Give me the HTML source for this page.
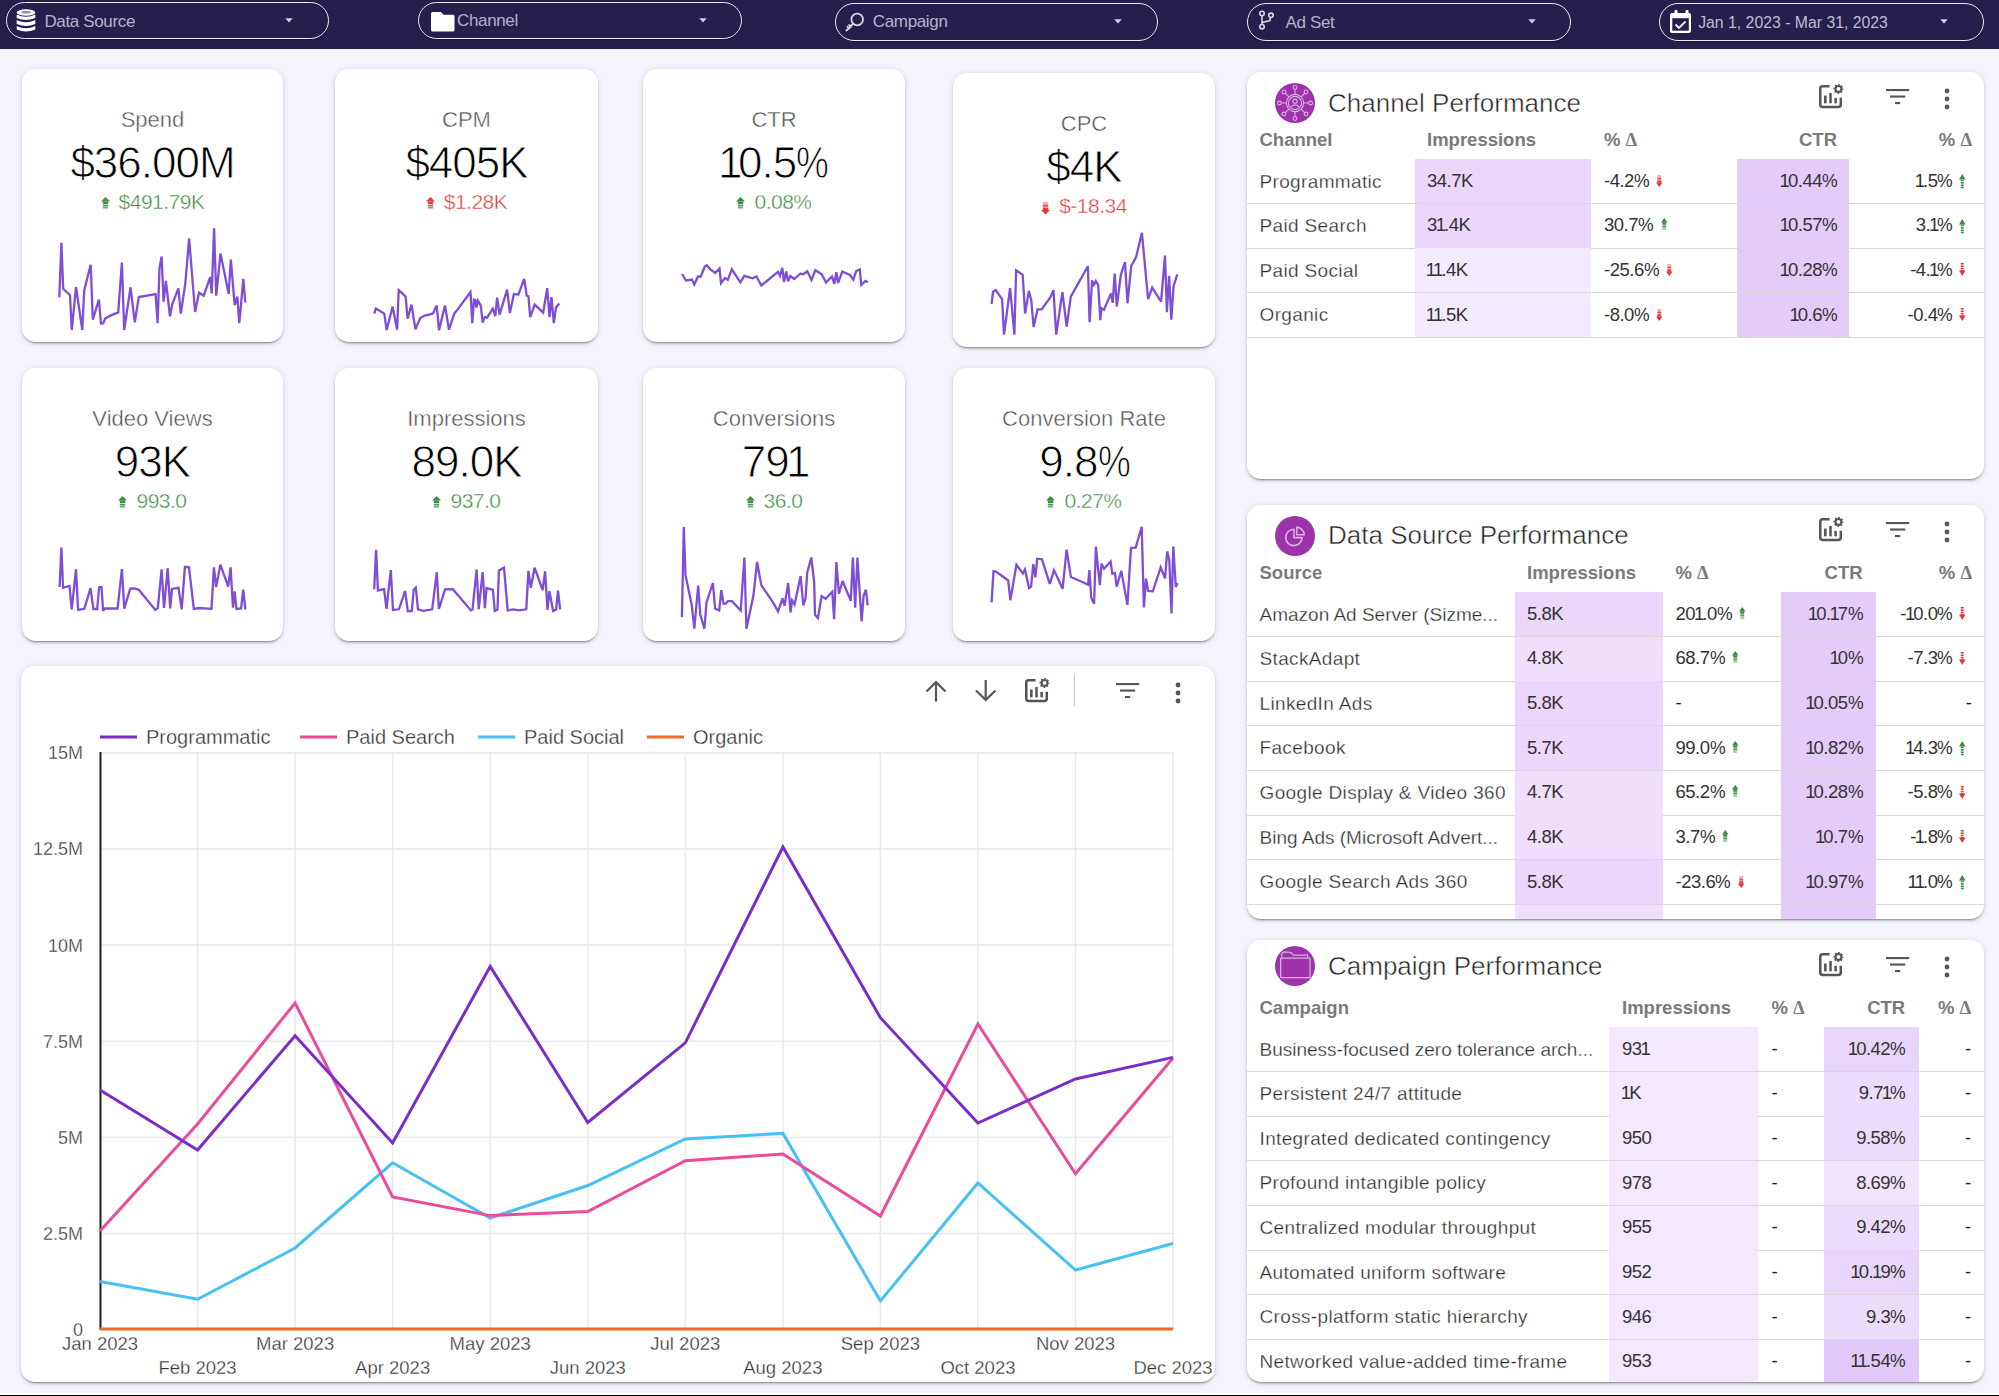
<!DOCTYPE html><html><head><meta charset="utf-8"><style>
html,body{margin:0;padding:0;}
body{width:1999px;height:1396px;overflow:hidden;background:#f5f6fd;position:relative;font-family:"Liberation Sans", sans-serif;}
.t{position:absolute;white-space:nowrap;line-height:1;}
.card{position:absolute;background:#fff;box-shadow:0 3px 1px -2px rgba(0,0,0,.22),0 2px 2px 0 rgba(0,0,0,.15),0 1px 6px 0 rgba(0,0,0,.13);}
.abs{position:absolute;}
svg{position:absolute;overflow:visible;}
</style></head><body>
<div class="abs" style="left:0;top:0;width:1999px;height:49px;background:#261f4e;"></div>
<div class="abs" style="left:6px;top:2px;width:321px;height:35px;border:1.5px solid #ecebf2;border-radius:19px;box-shadow:0 1px 2px rgba(0,0,0,.35);"></div>
<div class="abs" style="left:418px;top:2px;width:322px;height:35px;border:1.5px solid #ecebf2;border-radius:19px;box-shadow:0 1px 2px rgba(0,0,0,.35);"></div>
<div class="abs" style="left:835px;top:3px;width:321px;height:36px;border:1.5px solid #ecebf2;border-radius:19px;box-shadow:0 1px 2px rgba(0,0,0,.35);"></div>
<div class="abs" style="left:1246.5px;top:3px;width:322.0px;height:36px;border:1.5px solid #ecebf2;border-radius:19px;box-shadow:0 1px 2px rgba(0,0,0,.35);"></div>
<div class="abs" style="left:1659px;top:3px;width:323px;height:36px;border:1.5px solid #ecebf2;border-radius:19px;box-shadow:0 1px 2px rgba(0,0,0,.35);"></div>
<div class="card" style="left:22px;top:69px;width:261px;height:273px;border-radius:14px;"></div>
<div class="t" style="left:22.5px;width:260px;text-align:center;top:109.0px;font-size:22px;color:#555;font-weight:normal;-webkit-text-stroke:0.4px #fff;">Spend</div>
<div class="t" style="left:22.5px;width:260px;text-align:center;top:140.5px;font-size:44px;color:#000;font-weight:normal;letter-spacing:-1px;-webkit-text-stroke:0.9px #fff;">$36.00M</div>
<div class="t" style="left:22px;width:261px;text-align:center;top:190.9px;font-size:21px;color:#3d8c40;letter-spacing:-0.5px;-webkit-text-stroke:0.4px #fff;"><svg style="position:relative;display:inline-block;vertical-align:baseline;margin-right:9px;top:1.8px" width="9" height="13.5" viewBox="0 0 9 13.5"><path d="M4.5 0 L9 4.59 L0 4.59 Z" fill="#3d8c40"/><rect x="1.80" y="4.49" width="5.40" height="2.53" fill="#3d8c40" fill-opacity="1.0"/><rect x="1.80" y="7.69" width="5.40" height="1.75" fill="#3d8c40" fill-opacity="0.9"/><rect x="1.80" y="9.86" width="5.40" height="1.08" fill="#3d8c40" fill-opacity="0.75"/><rect x="1.80" y="11.34" width="5.40" height="0.81" fill="#3d8c40" fill-opacity="0.55"/></svg>$491.79K</div>
<div class="card" style="left:335px;top:69px;width:263px;height:273px;border-radius:14px;"></div>
<div class="t" style="left:336.5px;width:260px;text-align:center;top:109.0px;font-size:22px;color:#555;font-weight:normal;-webkit-text-stroke:0.4px #fff;">CPM</div>
<div class="t" style="left:336.5px;width:260px;text-align:center;top:140.5px;font-size:44px;color:#000;font-weight:normal;letter-spacing:-1px;-webkit-text-stroke:0.9px #fff;">$405K</div>
<div class="t" style="left:335px;width:263px;text-align:center;top:190.9px;font-size:21px;color:#e53935;letter-spacing:-0.5px;-webkit-text-stroke:0.4px #fff;"><svg style="position:relative;display:inline-block;vertical-align:baseline;margin-right:9px;top:1.8px" width="9" height="13.5" viewBox="0 0 9 13.5"><path d="M4.5 0 L9 4.59 L0 4.59 Z" fill="#e53935"/><rect x="1.80" y="4.49" width="5.40" height="2.53" fill="#e53935" fill-opacity="1.0"/><rect x="1.80" y="7.69" width="5.40" height="1.75" fill="#e53935" fill-opacity="0.9"/><rect x="1.80" y="9.86" width="5.40" height="1.08" fill="#e53935" fill-opacity="0.75"/><rect x="1.80" y="11.34" width="5.40" height="0.81" fill="#e53935" fill-opacity="0.55"/></svg>$1.28K</div>
<div class="card" style="left:643px;top:69px;width:262px;height:273px;border-radius:14px;"></div>
<div class="t" style="left:644.0px;width:260px;text-align:center;top:109.0px;font-size:22px;color:#555;font-weight:normal;-webkit-text-stroke:0.4px #fff;">CTR</div>
<div class="t" style="left:644.0px;width:260px;text-align:center;top:140.5px;font-size:44px;color:#000;font-weight:normal;letter-spacing:-1px;-webkit-text-stroke:0.9px #fff;"><span style="margin-left:-0.063em;margin-right:-0.077em">1</span>0.5<span style="display:inline-block;transform:scaleX(0.84);transform-origin:0 0;margin-right:-0.16em">%</span></div>
<div class="t" style="left:643px;width:262px;text-align:center;top:190.9px;font-size:21px;color:#3d8c40;letter-spacing:-0.5px;-webkit-text-stroke:0.4px #fff;"><svg style="position:relative;display:inline-block;vertical-align:baseline;margin-right:9px;top:1.8px" width="9" height="13.5" viewBox="0 0 9 13.5"><path d="M4.5 0 L9 4.59 L0 4.59 Z" fill="#3d8c40"/><rect x="1.80" y="4.49" width="5.40" height="2.53" fill="#3d8c40" fill-opacity="1.0"/><rect x="1.80" y="7.69" width="5.40" height="1.75" fill="#3d8c40" fill-opacity="0.9"/><rect x="1.80" y="9.86" width="5.40" height="1.08" fill="#3d8c40" fill-opacity="0.75"/><rect x="1.80" y="11.34" width="5.40" height="0.81" fill="#3d8c40" fill-opacity="0.55"/></svg>0.08%</div>
<div class="card" style="left:953px;top:73px;width:262px;height:274px;border-radius:14px;"></div>
<div class="t" style="left:954.0px;width:260px;text-align:center;top:113.0px;font-size:22px;color:#555;font-weight:normal;-webkit-text-stroke:0.4px #fff;">CPC</div>
<div class="t" style="left:954.0px;width:260px;text-align:center;top:144.5px;font-size:44px;color:#000;font-weight:normal;letter-spacing:-1px;-webkit-text-stroke:0.9px #fff;">$4K</div>
<div class="t" style="left:953px;width:262px;text-align:center;top:194.9px;font-size:21px;color:#e53935;letter-spacing:-0.5px;-webkit-text-stroke:0.4px #fff;"><svg style="position:relative;display:inline-block;vertical-align:baseline;margin-right:9px;top:1.8px" width="9" height="13.5" viewBox="0 0 9 13.5"><path d="M4.5 13.5 L9 8.91 L0 8.91 Z" fill="#e53935"/><rect x="1.80" y="6.48" width="5.40" height="2.53" fill="#e53935" fill-opacity="1.0"/><rect x="1.80" y="4.05" width="5.40" height="1.75" fill="#e53935" fill-opacity="0.9"/><rect x="1.80" y="2.56" width="5.40" height="1.08" fill="#e53935" fill-opacity="0.75"/><rect x="1.80" y="1.35" width="5.40" height="0.81" fill="#e53935" fill-opacity="0.55"/></svg>$-18.34</div>
<div class="card" style="left:22px;top:368px;width:261px;height:273px;border-radius:14px;"></div>
<div class="t" style="left:22.5px;width:260px;text-align:center;top:408.0px;font-size:22px;color:#555;font-weight:normal;-webkit-text-stroke:0.4px #fff;">Video Views</div>
<div class="t" style="left:22.5px;width:260px;text-align:center;top:439.5px;font-size:44px;color:#000;font-weight:normal;letter-spacing:-1px;-webkit-text-stroke:0.9px #fff;">93K</div>
<div class="t" style="left:22px;width:261px;text-align:center;top:489.9px;font-size:21px;color:#3d8c40;letter-spacing:-0.5px;-webkit-text-stroke:0.4px #fff;"><svg style="position:relative;display:inline-block;vertical-align:baseline;margin-right:9px;top:1.8px" width="9" height="13.5" viewBox="0 0 9 13.5"><path d="M4.5 0 L9 4.59 L0 4.59 Z" fill="#3d8c40"/><rect x="1.80" y="4.49" width="5.40" height="2.53" fill="#3d8c40" fill-opacity="1.0"/><rect x="1.80" y="7.69" width="5.40" height="1.75" fill="#3d8c40" fill-opacity="0.9"/><rect x="1.80" y="9.86" width="5.40" height="1.08" fill="#3d8c40" fill-opacity="0.75"/><rect x="1.80" y="11.34" width="5.40" height="0.81" fill="#3d8c40" fill-opacity="0.55"/></svg>993.0</div>
<div class="card" style="left:335px;top:368px;width:263px;height:273px;border-radius:14px;"></div>
<div class="t" style="left:336.5px;width:260px;text-align:center;top:408.0px;font-size:22px;color:#555;font-weight:normal;-webkit-text-stroke:0.4px #fff;">Impressions</div>
<div class="t" style="left:336.5px;width:260px;text-align:center;top:439.5px;font-size:44px;color:#000;font-weight:normal;letter-spacing:-1px;-webkit-text-stroke:0.9px #fff;">89.0K</div>
<div class="t" style="left:335px;width:263px;text-align:center;top:489.9px;font-size:21px;color:#3d8c40;letter-spacing:-0.5px;-webkit-text-stroke:0.4px #fff;"><svg style="position:relative;display:inline-block;vertical-align:baseline;margin-right:9px;top:1.8px" width="9" height="13.5" viewBox="0 0 9 13.5"><path d="M4.5 0 L9 4.59 L0 4.59 Z" fill="#3d8c40"/><rect x="1.80" y="4.49" width="5.40" height="2.53" fill="#3d8c40" fill-opacity="1.0"/><rect x="1.80" y="7.69" width="5.40" height="1.75" fill="#3d8c40" fill-opacity="0.9"/><rect x="1.80" y="9.86" width="5.40" height="1.08" fill="#3d8c40" fill-opacity="0.75"/><rect x="1.80" y="11.34" width="5.40" height="0.81" fill="#3d8c40" fill-opacity="0.55"/></svg>937.0</div>
<div class="card" style="left:643px;top:368px;width:262px;height:273px;border-radius:14px;"></div>
<div class="t" style="left:644.0px;width:260px;text-align:center;top:408.0px;font-size:22px;color:#555;font-weight:normal;-webkit-text-stroke:0.4px #fff;">Conversions</div>
<div class="t" style="left:644.0px;width:260px;text-align:center;top:439.5px;font-size:44px;color:#000;font-weight:normal;letter-spacing:-1px;-webkit-text-stroke:0.9px #fff;">79<span style="margin-left:-0.063em;margin-right:-0.077em">1</span></div>
<div class="t" style="left:643px;width:262px;text-align:center;top:489.9px;font-size:21px;color:#3d8c40;letter-spacing:-0.5px;-webkit-text-stroke:0.4px #fff;"><svg style="position:relative;display:inline-block;vertical-align:baseline;margin-right:9px;top:1.8px" width="9" height="13.5" viewBox="0 0 9 13.5"><path d="M4.5 0 L9 4.59 L0 4.59 Z" fill="#3d8c40"/><rect x="1.80" y="4.49" width="5.40" height="2.53" fill="#3d8c40" fill-opacity="1.0"/><rect x="1.80" y="7.69" width="5.40" height="1.75" fill="#3d8c40" fill-opacity="0.9"/><rect x="1.80" y="9.86" width="5.40" height="1.08" fill="#3d8c40" fill-opacity="0.75"/><rect x="1.80" y="11.34" width="5.40" height="0.81" fill="#3d8c40" fill-opacity="0.55"/></svg>36.0</div>
<div class="card" style="left:953px;top:368px;width:262px;height:273px;border-radius:14px;"></div>
<div class="t" style="left:954.0px;width:260px;text-align:center;top:408.0px;font-size:22px;color:#555;font-weight:normal;-webkit-text-stroke:0.4px #fff;">Conversion Rate</div>
<div class="t" style="left:954.0px;width:260px;text-align:center;top:439.5px;font-size:44px;color:#000;font-weight:normal;letter-spacing:-1px;-webkit-text-stroke:0.9px #fff;">9.8<span style="display:inline-block;transform:scaleX(0.84);transform-origin:0 0;margin-right:-0.16em">%</span></div>
<div class="t" style="left:953px;width:262px;text-align:center;top:489.9px;font-size:21px;color:#3d8c40;letter-spacing:-0.5px;-webkit-text-stroke:0.4px #fff;"><svg style="position:relative;display:inline-block;vertical-align:baseline;margin-right:9px;top:1.8px" width="9" height="13.5" viewBox="0 0 9 13.5"><path d="M4.5 0 L9 4.59 L0 4.59 Z" fill="#3d8c40"/><rect x="1.80" y="4.49" width="5.40" height="2.53" fill="#3d8c40" fill-opacity="1.0"/><rect x="1.80" y="7.69" width="5.40" height="1.75" fill="#3d8c40" fill-opacity="0.9"/><rect x="1.80" y="9.86" width="5.40" height="1.08" fill="#3d8c40" fill-opacity="0.75"/><rect x="1.80" y="11.34" width="5.40" height="0.81" fill="#3d8c40" fill-opacity="0.55"/></svg>0.27%</div>
<div class="card" style="left:21px;top:666px;width:1194px;height:716px;border-radius:14px;"></div>
<div class="card" style="left:1247px;top:72px;width:737px;height:407px;border-radius:14px;"></div>
<div class="card" style="left:1247px;top:505px;width:737px;height:414px;border-radius:14px;"></div>
<div class="card" style="left:1247px;top:940px;width:737px;height:442px;border-radius:14px;"></div>
<div class="t" style="left:44.4px;top:12.5px;font-size:17px;color:#b3b2cc;font-weight:normal;letter-spacing:-0.35px;">Data Source</div>
<div class="t" style="left:457px;top:12.2px;font-size:17px;color:#b3b2cc;font-weight:normal;letter-spacing:-0.35px;">Channel</div>
<div class="t" style="left:872.8px;top:13.4px;font-size:17px;color:#b3b2cc;font-weight:normal;letter-spacing:-0.35px;">Campaign</div>
<div class="t" style="left:1285.5px;top:14.0px;font-size:17px;color:#b3b2cc;font-weight:normal;letter-spacing:-0.35px;">Ad Set</div>
<div class="t" style="left:1698.2px;top:15.4px;font-size:15.8px;color:#bcbbd3;font-weight:normal;">Jan 1, 2023 - Mar 31, 2023</div>
<svg style="left:285.2px;top:17.9px" width="8" height="5"><path d="M0.3 0.3 L7.7 0.3 L4 4.4 Z" fill="#d2d1e3"/></svg>
<svg style="left:698.8px;top:17.9px" width="8" height="5"><path d="M0.3 0.3 L7.7 0.3 L4 4.4 Z" fill="#d2d1e3"/></svg>
<svg style="left:1114.4px;top:19.0px" width="8" height="5"><path d="M0.3 0.3 L7.7 0.3 L4 4.4 Z" fill="#d2d1e3"/></svg>
<svg style="left:1527.8px;top:19.0px" width="8" height="5"><path d="M0.3 0.3 L7.7 0.3 L4 4.4 Z" fill="#d2d1e3"/></svg>
<svg style="left:1939.7px;top:18.9px" width="8" height="5"><path d="M0.3 0.3 L7.7 0.3 L4 4.4 Z" fill="#d2d1e3"/></svg>
<svg style="left:16px;top:9px" width="20" height="24" viewBox="0 0 20 24"><ellipse cx="10" cy="3.5" rx="9.3" ry="3.2" fill="#fff"/><path d="M0.7 5.5 Q10 10 19.3 5.5 L19.3 9 Q10 13 0.7 9 Z" fill="#fff"/><path d="M0.7 11 Q10 15.5 19.3 11 L19.3 15 Q10 19 0.7 15 Z" fill="#fff"/><path d="M0.7 17 Q10 21.5 19.3 17 L19.3 20.5 Q10 24.5 0.7 20.5 Z" fill="#fff"/><ellipse cx="10" cy="3.3" rx="5" ry="1.3" fill="#8e8ca8"/></svg>
<svg style="left:430.5px;top:11.5px" width="24" height="20" viewBox="0 0 24 20"><path d="M1.5 0 H10 L12.5 2.7 H22 Q23.5 2.7 23.5 4.2 V18 Q23.5 19.5 22 19.5 H1.5 Q0 19.5 0 18 V1.5 Q0 0 1.5 0 Z" fill="#fff"/></svg>
<svg style="left:844px;top:11px" width="24" height="22" viewBox="0 0 24 22"><circle cx="13.2" cy="8.5" r="5.8" fill="none" stroke="#d8d7e6" stroke-width="1.8"/><path d="M9.2 12.7 L2.5 19.5 M3.5 15.8 L5.5 17.5 M5.2 14 L7 15.7" stroke="#d8d7e6" stroke-width="1.9" fill="none" stroke-linecap="round"/></svg>
<svg style="left:1257px;top:9px" width="22" height="22" viewBox="0 0 22 22"><circle cx="5" cy="4.5" r="2.2" fill="none" stroke="#d8d7e6" stroke-width="1.6"/><circle cx="14" cy="6.3" r="2.2" fill="none" stroke="#d8d7e6" stroke-width="1.6"/><circle cx="5" cy="17.7" r="2.2" fill="none" stroke="#d8d7e6" stroke-width="1.6"/><path d="M5 6.7 V15.5 M13.5 8.5 L12.8 11.5 L5.5 13.5" fill="none" stroke="#d8d7e6" stroke-width="1.6"/></svg>
<svg style="left:1670px;top:9.5px" width="22" height="24" viewBox="0 0 22 24"><rect x="0" y="3" width="21" height="20" rx="2" fill="#fff"/><rect x="4.5" y="0" width="3" height="4" rx="1" fill="#fff"/><rect x="15.5" y="0" width="3" height="4" rx="1" fill="#fff"/><rect x="2.3" y="8.2" width="16.5" height="12.5" fill="#261f4e"/><path d="M5.5 14.5 L9 18 L15.5 11.5" fill="none" stroke="#fff" stroke-width="1.8"/></svg>
<svg style="left:0;top:0" width="1999" height="1396"><line x1="100" y1="1329.5" x2="1173.5" y2="1329.5" stroke="#e9e9ee" stroke-width="1.5"/><line x1="100" y1="1233.4" x2="1173.5" y2="1233.4" stroke="#e9e9ee" stroke-width="1.5"/><line x1="100" y1="1137.3" x2="1173.5" y2="1137.3" stroke="#e9e9ee" stroke-width="1.5"/><line x1="100" y1="1041.2" x2="1173.5" y2="1041.2" stroke="#e9e9ee" stroke-width="1.5"/><line x1="100" y1="945.1" x2="1173.5" y2="945.1" stroke="#e9e9ee" stroke-width="1.5"/><line x1="100" y1="849.0" x2="1173.5" y2="849.0" stroke="#e9e9ee" stroke-width="1.5"/><line x1="100" y1="752.9" x2="1173.5" y2="752.9" stroke="#e9e9ee" stroke-width="1.5"/><line x1="100.0" y1="752" x2="100.0" y2="1329" stroke="#e9e9ee" stroke-width="1.5"/><line x1="197.6" y1="752" x2="197.6" y2="1329" stroke="#e9e9ee" stroke-width="1.5"/><line x1="295.1" y1="752" x2="295.1" y2="1329" stroke="#e9e9ee" stroke-width="1.5"/><line x1="392.6" y1="752" x2="392.6" y2="1329" stroke="#e9e9ee" stroke-width="1.5"/><line x1="490.2" y1="752" x2="490.2" y2="1329" stroke="#e9e9ee" stroke-width="1.5"/><line x1="587.8" y1="752" x2="587.8" y2="1329" stroke="#e9e9ee" stroke-width="1.5"/><line x1="685.3" y1="752" x2="685.3" y2="1329" stroke="#e9e9ee" stroke-width="1.5"/><line x1="782.9" y1="752" x2="782.9" y2="1329" stroke="#e9e9ee" stroke-width="1.5"/><line x1="880.4" y1="752" x2="880.4" y2="1329" stroke="#e9e9ee" stroke-width="1.5"/><line x1="977.9" y1="752" x2="977.9" y2="1329" stroke="#e9e9ee" stroke-width="1.5"/><line x1="1075.5" y1="752" x2="1075.5" y2="1329" stroke="#e9e9ee" stroke-width="1.5"/><line x1="1173.0" y1="752" x2="1173.0" y2="1329" stroke="#e9e9ee" stroke-width="1.5"/><line x1="100.5" y1="752" x2="100.5" y2="1330" stroke="#222" stroke-width="2"/><line x1="100" y1="1329" x2="1173" y2="1329" stroke="#ef6c2a" stroke-width="3"/><polyline points="100.0,1281.6 197.6,1299.3 295.1,1248.0 392.6,1162.8 490.2,1218.0 587.8,1185.5 685.3,1139.0 782.9,1133.4 880.4,1301.0 977.9,1183.0 1075.5,1270.0 1173.0,1243.5" fill="none" stroke="#47c1f4" stroke-width="3" stroke-linejoin="miter"/><polyline points="100.0,1231.0 197.6,1124.0 295.1,1003.0 392.6,1197.0 490.2,1215.6 587.8,1211.5 685.3,1160.7 782.9,1154.0 880.4,1216.0 977.9,1024.0 1075.5,1173.7 1173.0,1058.0" fill="none" stroke="#ea4b9a" stroke-width="3" stroke-linejoin="miter"/><polyline points="100.0,1090.0 197.6,1150.0 295.1,1035.7 392.6,1143.0 490.2,966.4 587.8,1122.5 685.3,1042.8 782.9,847.0 880.4,1017.7 977.9,1123.0 1075.5,1079.0 1173.0,1057.4" fill="none" stroke="#7a2ec9" stroke-width="3" stroke-linejoin="miter"/><line x1="100" y1="737" x2="137" y2="737" stroke="#7a2ec9" stroke-width="3"/><line x1="300" y1="737" x2="337" y2="737" stroke="#ea4b9a" stroke-width="3"/><line x1="478" y1="737" x2="515" y2="737" stroke="#47c1f4" stroke-width="3"/><line x1="647" y1="737" x2="684" y2="737" stroke="#ef6c2a" stroke-width="3"/></svg>
<div class="t" style="left:146px;top:726.8px;font-size:20px;color:#333;font-weight:normal;-webkit-text-stroke:0.3px #fff;">Programmatic</div>
<div class="t" style="left:346px;top:726.8px;font-size:20px;color:#333;font-weight:normal;-webkit-text-stroke:0.3px #fff;">Paid Search</div>
<div class="t" style="left:524px;top:726.8px;font-size:20px;color:#333;font-weight:normal;-webkit-text-stroke:0.3px #fff;">Paid Social</div>
<div class="t" style="left:693px;top:726.8px;font-size:20px;color:#333;font-weight:normal;-webkit-text-stroke:0.3px #fff;">Organic</div>
<div class="t" style="right:1916px;top:1320.9px;font-size:18px;color:#333;font-weight:normal;-webkit-text-stroke:0.3px #fff;">0</div>
<div class="t" style="right:1916px;top:1224.8px;font-size:18px;color:#333;font-weight:normal;-webkit-text-stroke:0.3px #fff;">2.5M</div>
<div class="t" style="right:1916px;top:1128.7px;font-size:18px;color:#333;font-weight:normal;-webkit-text-stroke:0.3px #fff;">5M</div>
<div class="t" style="right:1916px;top:1032.6px;font-size:18px;color:#333;font-weight:normal;-webkit-text-stroke:0.3px #fff;">7.5M</div>
<div class="t" style="right:1916px;top:936.5px;font-size:18px;color:#333;font-weight:normal;-webkit-text-stroke:0.3px #fff;">10M</div>
<div class="t" style="right:1916px;top:840.4px;font-size:18px;color:#333;font-weight:normal;-webkit-text-stroke:0.3px #fff;">12.5M</div>
<div class="t" style="right:1916px;top:744.3px;font-size:18px;color:#333;font-weight:normal;-webkit-text-stroke:0.3px #fff;">15M</div>
<div class="t" style="left:0.0px;width:200px;text-align:center;top:1335.1px;font-size:18.5px;color:#333;font-weight:normal;-webkit-text-stroke:0.3px #fff;">Jan 2023</div>
<div class="t" style="left:97.55000000000001px;width:200px;text-align:center;top:1358.6px;font-size:18.5px;color:#333;font-weight:normal;-webkit-text-stroke:0.3px #fff;">Feb 2023</div>
<div class="t" style="left:195.10000000000002px;width:200px;text-align:center;top:1335.1px;font-size:18.5px;color:#333;font-weight:normal;-webkit-text-stroke:0.3px #fff;">Mar 2023</div>
<div class="t" style="left:292.65px;width:200px;text-align:center;top:1358.6px;font-size:18.5px;color:#333;font-weight:normal;-webkit-text-stroke:0.3px #fff;">Apr 2023</div>
<div class="t" style="left:390.2px;width:200px;text-align:center;top:1335.1px;font-size:18.5px;color:#333;font-weight:normal;-webkit-text-stroke:0.3px #fff;">May 2023</div>
<div class="t" style="left:487.75px;width:200px;text-align:center;top:1358.6px;font-size:18.5px;color:#333;font-weight:normal;-webkit-text-stroke:0.3px #fff;">Jun 2023</div>
<div class="t" style="left:585.3px;width:200px;text-align:center;top:1335.1px;font-size:18.5px;color:#333;font-weight:normal;-webkit-text-stroke:0.3px #fff;">Jul 2023</div>
<div class="t" style="left:682.85px;width:200px;text-align:center;top:1358.6px;font-size:18.5px;color:#333;font-weight:normal;-webkit-text-stroke:0.3px #fff;">Aug 2023</div>
<div class="t" style="left:780.4px;width:200px;text-align:center;top:1335.1px;font-size:18.5px;color:#333;font-weight:normal;-webkit-text-stroke:0.3px #fff;">Sep 2023</div>
<div class="t" style="left:877.9499999999999px;width:200px;text-align:center;top:1358.6px;font-size:18.5px;color:#333;font-weight:normal;-webkit-text-stroke:0.3px #fff;">Oct 2023</div>
<div class="t" style="left:975.5px;width:200px;text-align:center;top:1335.1px;font-size:18.5px;color:#333;font-weight:normal;-webkit-text-stroke:0.3px #fff;">Nov 2023</div>
<div class="t" style="left:1073.05px;width:200px;text-align:center;top:1358.6px;font-size:18.5px;color:#333;font-weight:normal;-webkit-text-stroke:0.3px #fff;">Dec 2023</div>
<svg style="left:0;top:0" width="1999" height="1396"><path d="M936 701.5 V681.5 M926.5 691.5 L936 682 L945.5 691.5" fill="none" stroke="#555" stroke-width="2.2"/><path d="M985.7 680 V700 M976 690.5 L985.7 700 L995.5 690.5" fill="none" stroke="#555" stroke-width="2.2"/><line x1="1074.4" y1="675" x2="1074.4" y2="706.5" stroke="#cfcfcf" stroke-width="1.2"/></svg>
<svg style="left:1025.05px;top:674.05px" width="30" height="30" viewBox="0 -5 30 30"><path d="M10.55 1.25 H3.75 Q1.25 1.25 1.25 3.75 V19.6 Q1.25 22.1 3.75 22.1 H19.3 Q21.8 22.1 21.8 19.6 V12.85" fill="none" stroke="#555" stroke-width="2.5"/><rect x="5.05" y="10.55" width="2.6" height="7.8" fill="#555"/><rect x="10.25" y="7.95" width="2.5" height="10.4" fill="#555"/><rect x="15.35" y="12.85" width="2.5" height="5.5" fill="#555"/><circle cx="19.45" cy="3.95" r="2.95" fill="none" stroke="#555" stroke-width="2.1"/><circle cx="19.45" cy="3.95" r="4.35" fill="none" stroke="#555" stroke-width="1.3" stroke-dasharray="1.75 1.67" stroke-dashoffset="0.9"/></svg>
<svg style="left:1116px;top:683.2px" width="24" height="16" viewBox="0 0 24 16"><rect x="0" y="0" width="23.2" height="2.1" fill="#555"/><rect x="4" y="6.5" width="15.2" height="2.1" fill="#555"/><rect x="9" y="13" width="5.2" height="2.1" fill="#555"/></svg>
<svg style="left:1175.4px;top:681.8px" width="6" height="22" viewBox="0 0 6 22"><circle cx="3" cy="3" r="2.4" fill="#555"/><circle cx="3" cy="11" r="2.4" fill="#555"/><circle cx="3" cy="19" r="2.4" fill="#555"/></svg>
<div class="t" style="left:1328px;top:89.9px;font-size:26px;color:#222;font-weight:normal;-webkit-text-stroke:0.5px #fff;">Channel Performance</div>
<svg style="left:1274px;top:81.5px" width="42" height="42" viewBox="0 0 42 42"><circle cx="21" cy="21" r="20" fill="#9c33ab"/><circle cx="21" cy="21" r="8.6" fill="none" stroke="#dcb0e3" stroke-width="1.1"/><circle cx="21" cy="21" r="6.6" fill="none" stroke="#dcb0e3" stroke-width="1.1"/><circle cx="21" cy="19.2" r="2.1" fill="none" stroke="#dcb0e3" stroke-width="1.1"/><path d="M16.8 24.8 Q21 20.8 25.2 24.8" fill="none" stroke="#dcb0e3" stroke-width="1.1"/><line x1="21.00" y1="12.40" x2="21.00" y2="7.40" stroke="#dcb0e3" stroke-width="1.1"/><circle cx="21.00" cy="5.40" r="1.9" fill="none" stroke="#dcb0e3" stroke-width="1.1"/><line x1="27.08" y1="14.92" x2="30.62" y2="11.38" stroke="#dcb0e3" stroke-width="1.1"/><circle cx="32.03" cy="9.97" r="1.9" fill="none" stroke="#dcb0e3" stroke-width="1.1"/><line x1="29.60" y1="21.00" x2="34.60" y2="21.00" stroke="#dcb0e3" stroke-width="1.1"/><circle cx="36.60" cy="21.00" r="1.9" fill="none" stroke="#dcb0e3" stroke-width="1.1"/><line x1="27.08" y1="27.08" x2="30.62" y2="30.62" stroke="#dcb0e3" stroke-width="1.1"/><circle cx="32.03" cy="32.03" r="1.9" fill="none" stroke="#dcb0e3" stroke-width="1.1"/><line x1="21.00" y1="29.60" x2="21.00" y2="34.60" stroke="#dcb0e3" stroke-width="1.1"/><circle cx="21.00" cy="36.60" r="1.9" fill="none" stroke="#dcb0e3" stroke-width="1.1"/><line x1="14.92" y1="27.08" x2="11.38" y2="30.62" stroke="#dcb0e3" stroke-width="1.1"/><circle cx="9.97" cy="32.03" r="1.9" fill="none" stroke="#dcb0e3" stroke-width="1.1"/><line x1="12.40" y1="21.00" x2="7.40" y2="21.00" stroke="#dcb0e3" stroke-width="1.1"/><circle cx="5.40" cy="21.00" r="1.9" fill="none" stroke="#dcb0e3" stroke-width="1.1"/><line x1="14.92" y1="14.92" x2="11.38" y2="11.38" stroke="#dcb0e3" stroke-width="1.1"/><circle cx="9.97" cy="9.97" r="1.9" fill="none" stroke="#dcb0e3" stroke-width="1.1"/></svg>
<svg style="left:1819.2px;top:80.1px" width="30" height="30" viewBox="0 -5 30 30"><path d="M10.55 1.25 H3.75 Q1.25 1.25 1.25 3.75 V19.6 Q1.25 22.1 3.75 22.1 H19.3 Q21.8 22.1 21.8 19.6 V12.85" fill="none" stroke="#555" stroke-width="2.5"/><rect x="5.05" y="10.55" width="2.6" height="7.8" fill="#555"/><rect x="10.25" y="7.95" width="2.5" height="10.4" fill="#555"/><rect x="15.35" y="12.85" width="2.5" height="5.5" fill="#555"/><circle cx="19.45" cy="3.95" r="2.95" fill="none" stroke="#555" stroke-width="2.1"/><circle cx="19.45" cy="3.95" r="4.35" fill="none" stroke="#555" stroke-width="1.3" stroke-dasharray="1.75 1.67" stroke-dashoffset="0.9"/></svg>
<svg style="left:1886px;top:89px" width="24" height="16" viewBox="0 0 24 16"><rect x="0" y="0" width="23.2" height="2.1" fill="#555"/><rect x="4" y="6.5" width="15.2" height="2.1" fill="#555"/><rect x="9" y="13" width="5.2" height="2.1" fill="#555"/></svg>
<svg style="left:1944.2px;top:87.6px" width="6" height="22" viewBox="0 0 6 22"><circle cx="3" cy="3" r="2.4" fill="#555"/><circle cx="3" cy="11" r="2.4" fill="#555"/><circle cx="3" cy="19" r="2.4" fill="#555"/></svg>
<div class="t" style="left:1259.5px;top:130.6px;font-size:18.5px;color:#7a7a7a;font-weight:bold;">Channel</div>
<div class="t" style="left:1427px;top:130.6px;font-size:18.5px;color:#7a7a7a;font-weight:bold;">Impressions</div>
<div class="t" style="left:1604px;top:130.6px;font-size:18.5px;color:#7a7a7a;font-weight:bold;">% <span style="font-family:&quot;Liberation Serif&quot;, serif">&#916;</span></div>
<div class="t" style="right:162px;top:130.6px;font-size:18.5px;color:#7a7a7a;font-weight:bold;">CTR</div>
<div class="t" style="right:27px;top:130.6px;font-size:18.5px;color:#7a7a7a;font-weight:bold;">% <span style="font-family:&quot;Liberation Serif&quot;, serif">&#916;</span></div>
<div class="abs" style="left:1415px;top:159.0px;width:176px;height:44.7px;background:#ebd7fb;"></div>
<div class="abs" style="left:1737px;top:159.0px;width:112px;height:44.7px;background:#e3cbfa;"></div>
<div class="abs" style="left:1247px;top:203.0px;width:737px;height:1.3px;background:#d9d9d9;"></div>
<div class="abs" style="left:1415px;top:203.7px;width:176px;height:44.7px;background:#ebd7fb;"></div>
<div class="abs" style="left:1737px;top:203.7px;width:112px;height:44.7px;background:#e3cbfa;"></div>
<div class="abs" style="left:1247px;top:247.6px;width:737px;height:1.3px;background:#d9d9d9;"></div>
<div class="abs" style="left:1415px;top:248.3px;width:176px;height:44.6px;background:#f4eafd;"></div>
<div class="abs" style="left:1737px;top:248.3px;width:112px;height:44.6px;background:#e3cbfa;"></div>
<div class="abs" style="left:1247px;top:292.2px;width:737px;height:1.3px;background:#d9d9d9;"></div>
<div class="abs" style="left:1415px;top:292.9px;width:176px;height:44.6px;background:#f4eafd;"></div>
<div class="abs" style="left:1737px;top:292.9px;width:112px;height:44.6px;background:#e3cbfa;"></div>
<div class="abs" style="left:1247px;top:336.9px;width:737px;height:1.3px;background:#d9d9d9;"></div>
<div class="t" style="left:1259.5px;top:171.5px;font-size:19px;color:#2a2a2a;font-weight:normal;letter-spacing:0.35px;-webkit-text-stroke:0.3px #fff;">Programmatic</div>
<div class="t" style="left:1427px;top:171.6px;font-size:18.5px;color:#333;font-weight:normal;letter-spacing:-0.5px;">34.7K</div>
<div class="t" style="left:1604px;top:171.6px;font-size:18.5px;color:#333;letter-spacing:-0.5px;">-4.2<span style="display:inline-block;transform:scaleX(0.95);transform-origin:0 0;margin-right:-0.05em">%</span><svg style="position:relative;display:inline-block;vertical-align:baseline;margin-left:7.5px;" width="6.5" height="13" viewBox="0 0 6.5 13"><path d="M3.25 13 L6.5 8.58 L0 8.58 Z" fill="#e53935"/><rect x="1.30" y="6.24" width="3.90" height="2.44" fill="#e53935" fill-opacity="1.0"/><rect x="1.30" y="3.90" width="3.90" height="1.69" fill="#e53935" fill-opacity="0.9"/><rect x="1.30" y="2.47" width="3.90" height="1.04" fill="#e53935" fill-opacity="0.75"/><rect x="1.30" y="1.30" width="3.90" height="0.78" fill="#e53935" fill-opacity="0.55"/></svg></div>
<div class="t" style="right:162px;top:171.6px;font-size:18.5px;color:#333;font-weight:normal;letter-spacing:-0.5px;"><span style="margin-left:-0.063em;margin-right:-0.077em">1</span>0.44<span style="display:inline-block;transform:scaleX(0.95);transform-origin:0 0;margin-right:-0.05em">%</span></div>
<svg style="left:1959px;top:174.0px" width="6.5" height="13" viewBox="0 0 6.5 13"><path d="M3.25 0 L6.5 5.46 L0 5.46 Z" fill="#3d8c40"/><rect x="1.8200000000000003" y="5.66" width="2.86" height="1.6" fill="#3d8c40"/><rect x="1.8200000000000003" y="8.06" width="2.86" height="1.6" fill="#3d8c40"/><rect x="1.8200000000000003" y="10.46" width="2.86" height="1.6" fill="#3d8c40"/><rect x="1.8200000000000003" y="12.66" width="2.86" height="1.6" fill="#3d8c40"/></svg>
<div class="t" style="right:46.5px;top:171.6px;font-size:18.5px;color:#333;font-weight:normal;letter-spacing:-0.5px;"><span style="margin-left:-0.063em;margin-right:-0.077em">1</span>.5<span style="display:inline-block;transform:scaleX(0.95);transform-origin:0 0;margin-right:-0.05em">%</span></div>
<div class="t" style="left:1259.5px;top:216.1px;font-size:19px;color:#2a2a2a;font-weight:normal;letter-spacing:0.35px;-webkit-text-stroke:0.3px #fff;">Paid Search</div>
<div class="t" style="left:1427px;top:216.2px;font-size:18.5px;color:#333;font-weight:normal;letter-spacing:-0.5px;">3<span style="margin-left:-0.063em;margin-right:-0.077em">1</span>.4K</div>
<div class="t" style="left:1604px;top:216.2px;font-size:18.5px;color:#333;letter-spacing:-0.5px;">30.7<span style="display:inline-block;transform:scaleX(0.95);transform-origin:0 0;margin-right:-0.05em">%</span><svg style="position:relative;display:inline-block;vertical-align:baseline;margin-left:7.5px;" width="6.5" height="13" viewBox="0 0 6.5 13"><path d="M3.25 0 L6.5 4.42 L0 4.42 Z" fill="#3d8c40"/><rect x="1.30" y="4.32" width="3.90" height="2.44" fill="#3d8c40" fill-opacity="1.0"/><rect x="1.30" y="7.41" width="3.90" height="1.69" fill="#3d8c40" fill-opacity="0.9"/><rect x="1.30" y="9.49" width="3.90" height="1.04" fill="#3d8c40" fill-opacity="0.75"/><rect x="1.30" y="10.92" width="3.90" height="0.78" fill="#3d8c40" fill-opacity="0.55"/></svg></div>
<div class="t" style="right:162px;top:216.2px;font-size:18.5px;color:#333;font-weight:normal;letter-spacing:-0.5px;"><span style="margin-left:-0.063em;margin-right:-0.077em">1</span>0.57<span style="display:inline-block;transform:scaleX(0.95);transform-origin:0 0;margin-right:-0.05em">%</span></div>
<svg style="left:1959px;top:218.65px" width="6.5" height="13" viewBox="0 0 6.5 13"><path d="M3.25 0 L6.5 5.46 L0 5.46 Z" fill="#3d8c40"/><rect x="1.8200000000000003" y="5.66" width="2.86" height="1.6" fill="#3d8c40"/><rect x="1.8200000000000003" y="8.06" width="2.86" height="1.6" fill="#3d8c40"/><rect x="1.8200000000000003" y="10.46" width="2.86" height="1.6" fill="#3d8c40"/><rect x="1.8200000000000003" y="12.66" width="2.86" height="1.6" fill="#3d8c40"/></svg>
<div class="t" style="right:46.5px;top:216.2px;font-size:18.5px;color:#333;font-weight:normal;letter-spacing:-0.5px;">3.<span style="margin-left:-0.063em;margin-right:-0.077em">1</span><span style="display:inline-block;transform:scaleX(0.95);transform-origin:0 0;margin-right:-0.05em">%</span></div>
<div class="t" style="left:1259.5px;top:260.8px;font-size:19px;color:#2a2a2a;font-weight:normal;letter-spacing:0.35px;-webkit-text-stroke:0.3px #fff;">Paid Social</div>
<div class="t" style="left:1427px;top:260.9px;font-size:18.5px;color:#333;font-weight:normal;letter-spacing:-0.5px;"><span style="margin-left:-0.063em;margin-right:-0.077em">1</span><span style="margin-left:-0.063em;margin-right:-0.077em">1</span>.4K</div>
<div class="t" style="left:1604px;top:260.9px;font-size:18.5px;color:#333;letter-spacing:-0.5px;">-25.6<span style="display:inline-block;transform:scaleX(0.95);transform-origin:0 0;margin-right:-0.05em">%</span><svg style="position:relative;display:inline-block;vertical-align:baseline;margin-left:7.5px;" width="6.5" height="13" viewBox="0 0 6.5 13"><path d="M3.25 13 L6.5 8.58 L0 8.58 Z" fill="#e53935"/><rect x="1.30" y="6.24" width="3.90" height="2.44" fill="#e53935" fill-opacity="1.0"/><rect x="1.30" y="3.90" width="3.90" height="1.69" fill="#e53935" fill-opacity="0.9"/><rect x="1.30" y="2.47" width="3.90" height="1.04" fill="#e53935" fill-opacity="0.75"/><rect x="1.30" y="1.30" width="3.90" height="0.78" fill="#e53935" fill-opacity="0.55"/></svg></div>
<div class="t" style="right:162px;top:260.9px;font-size:18.5px;color:#333;font-weight:normal;letter-spacing:-0.5px;"><span style="margin-left:-0.063em;margin-right:-0.077em">1</span>0.28<span style="display:inline-block;transform:scaleX(0.95);transform-origin:0 0;margin-right:-0.05em">%</span></div>
<svg style="left:1959px;top:263.3px" width="6.5" height="13" viewBox="0 0 6.5 13"><path d="M3.25 13 L6.5 7.54 L0 7.54 Z" fill="#e53935"/><rect x="1.8200000000000003" y="0.00" width="2.86" height="1.6" fill="#e53935"/><rect x="1.8200000000000003" y="2.40" width="2.86" height="1.6" fill="#e53935"/><rect x="1.8200000000000003" y="4.80" width="2.86" height="1.6" fill="#e53935"/><rect x="1.8200000000000003" y="7.00" width="2.86" height="1.6" fill="#e53935"/></svg>
<div class="t" style="right:46.5px;top:260.9px;font-size:18.5px;color:#333;font-weight:normal;letter-spacing:-0.5px;">-4.<span style="margin-left:-0.063em;margin-right:-0.077em">1</span><span style="display:inline-block;transform:scaleX(0.95);transform-origin:0 0;margin-right:-0.05em">%</span></div>
<div class="t" style="left:1259.5px;top:305.4px;font-size:19px;color:#2a2a2a;font-weight:normal;letter-spacing:0.35px;-webkit-text-stroke:0.3px #fff;">Organic</div>
<div class="t" style="left:1427px;top:305.5px;font-size:18.5px;color:#333;font-weight:normal;letter-spacing:-0.5px;"><span style="margin-left:-0.063em;margin-right:-0.077em">1</span><span style="margin-left:-0.063em;margin-right:-0.077em">1</span>.5K</div>
<div class="t" style="left:1604px;top:305.5px;font-size:18.5px;color:#333;letter-spacing:-0.5px;">-8.0<span style="display:inline-block;transform:scaleX(0.95);transform-origin:0 0;margin-right:-0.05em">%</span><svg style="position:relative;display:inline-block;vertical-align:baseline;margin-left:7.5px;" width="6.5" height="13" viewBox="0 0 6.5 13"><path d="M3.25 13 L6.5 8.58 L0 8.58 Z" fill="#e53935"/><rect x="1.30" y="6.24" width="3.90" height="2.44" fill="#e53935" fill-opacity="1.0"/><rect x="1.30" y="3.90" width="3.90" height="1.69" fill="#e53935" fill-opacity="0.9"/><rect x="1.30" y="2.47" width="3.90" height="1.04" fill="#e53935" fill-opacity="0.75"/><rect x="1.30" y="1.30" width="3.90" height="0.78" fill="#e53935" fill-opacity="0.55"/></svg></div>
<div class="t" style="right:162px;top:305.5px;font-size:18.5px;color:#333;font-weight:normal;letter-spacing:-0.5px;"><span style="margin-left:-0.063em;margin-right:-0.077em">1</span>0.6<span style="display:inline-block;transform:scaleX(0.95);transform-origin:0 0;margin-right:-0.05em">%</span></div>
<svg style="left:1959px;top:307.95px" width="6.5" height="13" viewBox="0 0 6.5 13"><path d="M3.25 13 L6.5 7.54 L0 7.54 Z" fill="#e53935"/><rect x="1.8200000000000003" y="0.00" width="2.86" height="1.6" fill="#e53935"/><rect x="1.8200000000000003" y="2.40" width="2.86" height="1.6" fill="#e53935"/><rect x="1.8200000000000003" y="4.80" width="2.86" height="1.6" fill="#e53935"/><rect x="1.8200000000000003" y="7.00" width="2.86" height="1.6" fill="#e53935"/></svg>
<div class="t" style="right:46.5px;top:305.5px;font-size:18.5px;color:#333;font-weight:normal;letter-spacing:-0.5px;">-0.4<span style="display:inline-block;transform:scaleX(0.95);transform-origin:0 0;margin-right:-0.05em">%</span></div>
<div class="t" style="left:1328px;top:521.9px;font-size:26px;color:#222;font-weight:normal;-webkit-text-stroke:0.5px #fff;">Data Source Performance</div>
<svg style="left:1274px;top:515px" width="42" height="42" viewBox="0 0 42 42"><circle cx="21" cy="21" r="20" fill="#9c33ab"/><path d="M20 14.2 A8.2 8.2 0 1 0 28.1 22.6 L20 22.6 Z" fill="none" stroke="#dcb0e3" stroke-width="1.6" stroke-linejoin="round"/><path d="M22.8 12 L22.8 19.8 L30.3 19.8 Q29.5 13.3 22.8 12 Z" fill="none" stroke="#dcb0e3" stroke-width="1.5" stroke-linejoin="round"/></svg>
<svg style="left:1819.2px;top:513.1px" width="30" height="30" viewBox="0 -5 30 30"><path d="M10.55 1.25 H3.75 Q1.25 1.25 1.25 3.75 V19.6 Q1.25 22.1 3.75 22.1 H19.3 Q21.8 22.1 21.8 19.6 V12.85" fill="none" stroke="#555" stroke-width="2.5"/><rect x="5.05" y="10.55" width="2.6" height="7.8" fill="#555"/><rect x="10.25" y="7.95" width="2.5" height="10.4" fill="#555"/><rect x="15.35" y="12.85" width="2.5" height="5.5" fill="#555"/><circle cx="19.45" cy="3.95" r="2.95" fill="none" stroke="#555" stroke-width="2.1"/><circle cx="19.45" cy="3.95" r="4.35" fill="none" stroke="#555" stroke-width="1.3" stroke-dasharray="1.75 1.67" stroke-dashoffset="0.9"/></svg>
<svg style="left:1886px;top:522px" width="24" height="16" viewBox="0 0 24 16"><rect x="0" y="0" width="23.2" height="2.1" fill="#555"/><rect x="4" y="6.5" width="15.2" height="2.1" fill="#555"/><rect x="9" y="13" width="5.2" height="2.1" fill="#555"/></svg>
<svg style="left:1944.2px;top:520.6px" width="6" height="22" viewBox="0 0 6 22"><circle cx="3" cy="3" r="2.4" fill="#555"/><circle cx="3" cy="11" r="2.4" fill="#555"/><circle cx="3" cy="19" r="2.4" fill="#555"/></svg>
<div class="t" style="left:1259.5px;top:563.6px;font-size:18.5px;color:#7a7a7a;font-weight:bold;">Source</div>
<div class="t" style="left:1527px;top:563.6px;font-size:18.5px;color:#7a7a7a;font-weight:bold;">Impressions</div>
<div class="t" style="left:1675.5px;top:563.6px;font-size:18.5px;color:#7a7a7a;font-weight:bold;">% <span style="font-family:&quot;Liberation Serif&quot;, serif">&#916;</span></div>
<div class="t" style="right:136.4000000000001px;top:563.6px;font-size:18.5px;color:#7a7a7a;font-weight:bold;">CTR</div>
<div class="t" style="right:27px;top:563.6px;font-size:18.5px;color:#7a7a7a;font-weight:bold;">% <span style="font-family:&quot;Liberation Serif&quot;, serif">&#916;</span></div>
<div class="abs" style="left:1514.5px;top:592.0px;width:148.0px;height:44.6px;background:#ebd7fb;"></div>
<div class="abs" style="left:1781px;top:592.0px;width:95px;height:44.6px;background:#e3cbfa;"></div>
<div class="abs" style="left:1247px;top:635.9px;width:737px;height:1.3px;background:#d9d9d9;"></div>
<div class="abs" style="left:1514.5px;top:636.6px;width:148.0px;height:44.6px;background:#efdffc;"></div>
<div class="abs" style="left:1781px;top:636.6px;width:95px;height:44.6px;background:#e3cbfa;"></div>
<div class="abs" style="left:1247px;top:680.6px;width:737px;height:1.3px;background:#d9d9d9;"></div>
<div class="abs" style="left:1514.5px;top:681.3px;width:148.0px;height:44.6px;background:#ebd7fb;"></div>
<div class="abs" style="left:1781px;top:681.3px;width:95px;height:44.6px;background:#e3cbfa;"></div>
<div class="abs" style="left:1247px;top:725.2px;width:737px;height:1.3px;background:#d9d9d9;"></div>
<div class="abs" style="left:1514.5px;top:726.0px;width:148.0px;height:44.6px;background:#ebd7fb;"></div>
<div class="abs" style="left:1781px;top:726.0px;width:95px;height:44.6px;background:#e3cbfa;"></div>
<div class="abs" style="left:1247px;top:769.9px;width:737px;height:1.3px;background:#d9d9d9;"></div>
<div class="abs" style="left:1514.5px;top:770.6px;width:148.0px;height:44.6px;background:#efdffc;"></div>
<div class="abs" style="left:1781px;top:770.6px;width:95px;height:44.6px;background:#e3cbfa;"></div>
<div class="abs" style="left:1247px;top:814.5px;width:737px;height:1.3px;background:#d9d9d9;"></div>
<div class="abs" style="left:1514.5px;top:815.2px;width:148.0px;height:44.6px;background:#efdffc;"></div>
<div class="abs" style="left:1781px;top:815.2px;width:95px;height:44.6px;background:#e3cbfa;"></div>
<div class="abs" style="left:1247px;top:859.2px;width:737px;height:1.3px;background:#d9d9d9;"></div>
<div class="abs" style="left:1514.5px;top:859.9px;width:148.0px;height:44.6px;background:#ebd7fb;"></div>
<div class="abs" style="left:1781px;top:859.9px;width:95px;height:44.6px;background:#e3cbfa;"></div>
<div class="abs" style="left:1247px;top:903.8px;width:737px;height:1.3px;background:#d9d9d9;"></div>
<div class="abs" style="left:1514.5px;top:904.5px;width:148.0px;height:14.5px;background:#efdffc;"></div>
<div class="abs" style="left:1781px;top:904.5px;width:95px;height:14.5px;background:#e3cbfa;"></div>
<div class="t" style="left:1259.5px;top:604.5px;font-size:19px;color:#2a2a2a;font-weight:normal;letter-spacing:0px;-webkit-text-stroke:0.3px #fff;">Amazon Ad Server (Sizme...</div>
<div class="t" style="left:1527px;top:604.6px;font-size:18.5px;color:#333;font-weight:normal;letter-spacing:-0.5px;">5.8K</div>
<div class="t" style="left:1675.5px;top:604.6px;font-size:18.5px;color:#333;letter-spacing:-0.5px;">20<span style="margin-left:-0.063em;margin-right:-0.077em">1</span>.0<span style="display:inline-block;transform:scaleX(0.95);transform-origin:0 0;margin-right:-0.05em">%</span><svg style="position:relative;display:inline-block;vertical-align:baseline;margin-left:7.5px;" width="6.5" height="13" viewBox="0 0 6.5 13"><path d="M3.25 0 L6.5 4.42 L0 4.42 Z" fill="#3d8c40"/><rect x="1.30" y="4.32" width="3.90" height="2.44" fill="#3d8c40" fill-opacity="1.0"/><rect x="1.30" y="7.41" width="3.90" height="1.69" fill="#3d8c40" fill-opacity="0.9"/><rect x="1.30" y="9.49" width="3.90" height="1.04" fill="#3d8c40" fill-opacity="0.75"/><rect x="1.30" y="10.92" width="3.90" height="0.78" fill="#3d8c40" fill-opacity="0.55"/></svg></div>
<div class="t" style="right:136.4000000000001px;top:604.6px;font-size:18.5px;color:#333;font-weight:normal;letter-spacing:-0.5px;"><span style="margin-left:-0.063em;margin-right:-0.077em">1</span>0.<span style="margin-left:-0.063em;margin-right:-0.077em">1</span>7<span style="display:inline-block;transform:scaleX(0.95);transform-origin:0 0;margin-right:-0.05em">%</span></div>
<svg style="left:1959px;top:607.0px" width="6.5" height="13" viewBox="0 0 6.5 13"><path d="M3.25 13 L6.5 7.54 L0 7.54 Z" fill="#e53935"/><rect x="1.8200000000000003" y="0.00" width="2.86" height="1.6" fill="#e53935"/><rect x="1.8200000000000003" y="2.40" width="2.86" height="1.6" fill="#e53935"/><rect x="1.8200000000000003" y="4.80" width="2.86" height="1.6" fill="#e53935"/><rect x="1.8200000000000003" y="7.00" width="2.86" height="1.6" fill="#e53935"/></svg>
<div class="t" style="right:46.5px;top:604.6px;font-size:18.5px;color:#333;font-weight:normal;letter-spacing:-0.5px;">-<span style="margin-left:-0.063em;margin-right:-0.077em">1</span>0.0<span style="display:inline-block;transform:scaleX(0.95);transform-origin:0 0;margin-right:-0.05em">%</span></div>
<div class="t" style="left:1259.5px;top:649.1px;font-size:19px;color:#2a2a2a;font-weight:normal;letter-spacing:0.35px;-webkit-text-stroke:0.3px #fff;">StackAdapt</div>
<div class="t" style="left:1527px;top:649.2px;font-size:18.5px;color:#333;font-weight:normal;letter-spacing:-0.5px;">4.8K</div>
<div class="t" style="left:1675.5px;top:649.2px;font-size:18.5px;color:#333;letter-spacing:-0.5px;">68.7<span style="display:inline-block;transform:scaleX(0.95);transform-origin:0 0;margin-right:-0.05em">%</span><svg style="position:relative;display:inline-block;vertical-align:baseline;margin-left:7.5px;" width="6.5" height="13" viewBox="0 0 6.5 13"><path d="M3.25 0 L6.5 4.42 L0 4.42 Z" fill="#3d8c40"/><rect x="1.30" y="4.32" width="3.90" height="2.44" fill="#3d8c40" fill-opacity="1.0"/><rect x="1.30" y="7.41" width="3.90" height="1.69" fill="#3d8c40" fill-opacity="0.9"/><rect x="1.30" y="9.49" width="3.90" height="1.04" fill="#3d8c40" fill-opacity="0.75"/><rect x="1.30" y="10.92" width="3.90" height="0.78" fill="#3d8c40" fill-opacity="0.55"/></svg></div>
<div class="t" style="right:136.4000000000001px;top:649.2px;font-size:18.5px;color:#333;font-weight:normal;letter-spacing:-0.5px;"><span style="margin-left:-0.063em;margin-right:-0.077em">1</span>0<span style="display:inline-block;transform:scaleX(0.95);transform-origin:0 0;margin-right:-0.05em">%</span></div>
<svg style="left:1959px;top:651.65px" width="6.5" height="13" viewBox="0 0 6.5 13"><path d="M3.25 13 L6.5 7.54 L0 7.54 Z" fill="#e53935"/><rect x="1.8200000000000003" y="0.00" width="2.86" height="1.6" fill="#e53935"/><rect x="1.8200000000000003" y="2.40" width="2.86" height="1.6" fill="#e53935"/><rect x="1.8200000000000003" y="4.80" width="2.86" height="1.6" fill="#e53935"/><rect x="1.8200000000000003" y="7.00" width="2.86" height="1.6" fill="#e53935"/></svg>
<div class="t" style="right:46.5px;top:649.2px;font-size:18.5px;color:#333;font-weight:normal;letter-spacing:-0.5px;">-7.3<span style="display:inline-block;transform:scaleX(0.95);transform-origin:0 0;margin-right:-0.05em">%</span></div>
<div class="t" style="left:1259.5px;top:693.8px;font-size:19px;color:#2a2a2a;font-weight:normal;letter-spacing:0.35px;-webkit-text-stroke:0.3px #fff;">LinkedIn Ads</div>
<div class="t" style="left:1527px;top:693.9px;font-size:18.5px;color:#333;font-weight:normal;letter-spacing:-0.5px;">5.8K</div>
<div class="t" style="left:1675.5px;top:693.9px;font-size:18.5px;color:#222;font-weight:normal;">-</div>
<div class="t" style="right:136.4000000000001px;top:693.9px;font-size:18.5px;color:#333;font-weight:normal;letter-spacing:-0.5px;"><span style="margin-left:-0.063em;margin-right:-0.077em">1</span>0.05<span style="display:inline-block;transform:scaleX(0.95);transform-origin:0 0;margin-right:-0.05em">%</span></div>
<div class="t" style="right:27px;top:693.9px;font-size:18.5px;color:#222;font-weight:normal;">-</div>
<div class="t" style="left:1259.5px;top:738.4px;font-size:19px;color:#2a2a2a;font-weight:normal;letter-spacing:0.35px;-webkit-text-stroke:0.3px #fff;">Facebook</div>
<div class="t" style="left:1527px;top:738.5px;font-size:18.5px;color:#333;font-weight:normal;letter-spacing:-0.5px;">5.7K</div>
<div class="t" style="left:1675.5px;top:738.5px;font-size:18.5px;color:#333;letter-spacing:-0.5px;">99.0<span style="display:inline-block;transform:scaleX(0.95);transform-origin:0 0;margin-right:-0.05em">%</span><svg style="position:relative;display:inline-block;vertical-align:baseline;margin-left:7.5px;" width="6.5" height="13" viewBox="0 0 6.5 13"><path d="M3.25 0 L6.5 4.42 L0 4.42 Z" fill="#3d8c40"/><rect x="1.30" y="4.32" width="3.90" height="2.44" fill="#3d8c40" fill-opacity="1.0"/><rect x="1.30" y="7.41" width="3.90" height="1.69" fill="#3d8c40" fill-opacity="0.9"/><rect x="1.30" y="9.49" width="3.90" height="1.04" fill="#3d8c40" fill-opacity="0.75"/><rect x="1.30" y="10.92" width="3.90" height="0.78" fill="#3d8c40" fill-opacity="0.55"/></svg></div>
<div class="t" style="right:136.4000000000001px;top:738.5px;font-size:18.5px;color:#333;font-weight:normal;letter-spacing:-0.5px;"><span style="margin-left:-0.063em;margin-right:-0.077em">1</span>0.82<span style="display:inline-block;transform:scaleX(0.95);transform-origin:0 0;margin-right:-0.05em">%</span></div>
<svg style="left:1959px;top:740.95px" width="6.5" height="13" viewBox="0 0 6.5 13"><path d="M3.25 0 L6.5 5.46 L0 5.46 Z" fill="#3d8c40"/><rect x="1.8200000000000003" y="5.66" width="2.86" height="1.6" fill="#3d8c40"/><rect x="1.8200000000000003" y="8.06" width="2.86" height="1.6" fill="#3d8c40"/><rect x="1.8200000000000003" y="10.46" width="2.86" height="1.6" fill="#3d8c40"/><rect x="1.8200000000000003" y="12.66" width="2.86" height="1.6" fill="#3d8c40"/></svg>
<div class="t" style="right:46.5px;top:738.5px;font-size:18.5px;color:#333;font-weight:normal;letter-spacing:-0.5px;"><span style="margin-left:-0.063em;margin-right:-0.077em">1</span>4.3<span style="display:inline-block;transform:scaleX(0.95);transform-origin:0 0;margin-right:-0.05em">%</span></div>
<div class="t" style="left:1259.5px;top:783.1px;font-size:19px;color:#2a2a2a;font-weight:normal;letter-spacing:0.35px;-webkit-text-stroke:0.3px #fff;">Google Display &amp; Video 360</div>
<div class="t" style="left:1527px;top:783.2px;font-size:18.5px;color:#333;font-weight:normal;letter-spacing:-0.5px;">4.7K</div>
<div class="t" style="left:1675.5px;top:783.2px;font-size:18.5px;color:#333;letter-spacing:-0.5px;">65.2<span style="display:inline-block;transform:scaleX(0.95);transform-origin:0 0;margin-right:-0.05em">%</span><svg style="position:relative;display:inline-block;vertical-align:baseline;margin-left:7.5px;" width="6.5" height="13" viewBox="0 0 6.5 13"><path d="M3.25 0 L6.5 4.42 L0 4.42 Z" fill="#3d8c40"/><rect x="1.30" y="4.32" width="3.90" height="2.44" fill="#3d8c40" fill-opacity="1.0"/><rect x="1.30" y="7.41" width="3.90" height="1.69" fill="#3d8c40" fill-opacity="0.9"/><rect x="1.30" y="9.49" width="3.90" height="1.04" fill="#3d8c40" fill-opacity="0.75"/><rect x="1.30" y="10.92" width="3.90" height="0.78" fill="#3d8c40" fill-opacity="0.55"/></svg></div>
<div class="t" style="right:136.4000000000001px;top:783.2px;font-size:18.5px;color:#333;font-weight:normal;letter-spacing:-0.5px;"><span style="margin-left:-0.063em;margin-right:-0.077em">1</span>0.28<span style="display:inline-block;transform:scaleX(0.95);transform-origin:0 0;margin-right:-0.05em">%</span></div>
<svg style="left:1959px;top:785.6px" width="6.5" height="13" viewBox="0 0 6.5 13"><path d="M3.25 13 L6.5 7.54 L0 7.54 Z" fill="#e53935"/><rect x="1.8200000000000003" y="0.00" width="2.86" height="1.6" fill="#e53935"/><rect x="1.8200000000000003" y="2.40" width="2.86" height="1.6" fill="#e53935"/><rect x="1.8200000000000003" y="4.80" width="2.86" height="1.6" fill="#e53935"/><rect x="1.8200000000000003" y="7.00" width="2.86" height="1.6" fill="#e53935"/></svg>
<div class="t" style="right:46.5px;top:783.2px;font-size:18.5px;color:#333;font-weight:normal;letter-spacing:-0.5px;">-5.8<span style="display:inline-block;transform:scaleX(0.95);transform-origin:0 0;margin-right:-0.05em">%</span></div>
<div class="t" style="left:1259.5px;top:827.7px;font-size:19px;color:#2a2a2a;font-weight:normal;letter-spacing:0px;-webkit-text-stroke:0.3px #fff;">Bing Ads (Microsoft Advert...</div>
<div class="t" style="left:1527px;top:827.8px;font-size:18.5px;color:#333;font-weight:normal;letter-spacing:-0.5px;">4.8K</div>
<div class="t" style="left:1675.5px;top:827.8px;font-size:18.5px;color:#333;letter-spacing:-0.5px;">3.7<span style="display:inline-block;transform:scaleX(0.95);transform-origin:0 0;margin-right:-0.05em">%</span><svg style="position:relative;display:inline-block;vertical-align:baseline;margin-left:7.5px;" width="6.5" height="13" viewBox="0 0 6.5 13"><path d="M3.25 0 L6.5 4.42 L0 4.42 Z" fill="#3d8c40"/><rect x="1.30" y="4.32" width="3.90" height="2.44" fill="#3d8c40" fill-opacity="1.0"/><rect x="1.30" y="7.41" width="3.90" height="1.69" fill="#3d8c40" fill-opacity="0.9"/><rect x="1.30" y="9.49" width="3.90" height="1.04" fill="#3d8c40" fill-opacity="0.75"/><rect x="1.30" y="10.92" width="3.90" height="0.78" fill="#3d8c40" fill-opacity="0.55"/></svg></div>
<div class="t" style="right:136.4000000000001px;top:827.8px;font-size:18.5px;color:#333;font-weight:normal;letter-spacing:-0.5px;"><span style="margin-left:-0.063em;margin-right:-0.077em">1</span>0.7<span style="display:inline-block;transform:scaleX(0.95);transform-origin:0 0;margin-right:-0.05em">%</span></div>
<svg style="left:1959px;top:830.25px" width="6.5" height="13" viewBox="0 0 6.5 13"><path d="M3.25 13 L6.5 7.54 L0 7.54 Z" fill="#e53935"/><rect x="1.8200000000000003" y="0.00" width="2.86" height="1.6" fill="#e53935"/><rect x="1.8200000000000003" y="2.40" width="2.86" height="1.6" fill="#e53935"/><rect x="1.8200000000000003" y="4.80" width="2.86" height="1.6" fill="#e53935"/><rect x="1.8200000000000003" y="7.00" width="2.86" height="1.6" fill="#e53935"/></svg>
<div class="t" style="right:46.5px;top:827.8px;font-size:18.5px;color:#333;font-weight:normal;letter-spacing:-0.5px;">-<span style="margin-left:-0.063em;margin-right:-0.077em">1</span>.8<span style="display:inline-block;transform:scaleX(0.95);transform-origin:0 0;margin-right:-0.05em">%</span></div>
<div class="t" style="left:1259.5px;top:872.4px;font-size:19px;color:#2a2a2a;font-weight:normal;letter-spacing:0.35px;-webkit-text-stroke:0.3px #fff;">Google Search Ads 360</div>
<div class="t" style="left:1527px;top:872.5px;font-size:18.5px;color:#333;font-weight:normal;letter-spacing:-0.5px;">5.8K</div>
<div class="t" style="left:1675.5px;top:872.5px;font-size:18.5px;color:#333;letter-spacing:-0.5px;">-23.6<span style="display:inline-block;transform:scaleX(0.95);transform-origin:0 0;margin-right:-0.05em">%</span><svg style="position:relative;display:inline-block;vertical-align:baseline;margin-left:7.5px;" width="6.5" height="13" viewBox="0 0 6.5 13"><path d="M3.25 13 L6.5 8.58 L0 8.58 Z" fill="#e53935"/><rect x="1.30" y="6.24" width="3.90" height="2.44" fill="#e53935" fill-opacity="1.0"/><rect x="1.30" y="3.90" width="3.90" height="1.69" fill="#e53935" fill-opacity="0.9"/><rect x="1.30" y="2.47" width="3.90" height="1.04" fill="#e53935" fill-opacity="0.75"/><rect x="1.30" y="1.30" width="3.90" height="0.78" fill="#e53935" fill-opacity="0.55"/></svg></div>
<div class="t" style="right:136.4000000000001px;top:872.5px;font-size:18.5px;color:#333;font-weight:normal;letter-spacing:-0.5px;"><span style="margin-left:-0.063em;margin-right:-0.077em">1</span>0.97<span style="display:inline-block;transform:scaleX(0.95);transform-origin:0 0;margin-right:-0.05em">%</span></div>
<svg style="left:1959px;top:874.9px" width="6.5" height="13" viewBox="0 0 6.5 13"><path d="M3.25 0 L6.5 5.46 L0 5.46 Z" fill="#3d8c40"/><rect x="1.8200000000000003" y="5.66" width="2.86" height="1.6" fill="#3d8c40"/><rect x="1.8200000000000003" y="8.06" width="2.86" height="1.6" fill="#3d8c40"/><rect x="1.8200000000000003" y="10.46" width="2.86" height="1.6" fill="#3d8c40"/><rect x="1.8200000000000003" y="12.66" width="2.86" height="1.6" fill="#3d8c40"/></svg>
<div class="t" style="right:46.5px;top:872.5px;font-size:18.5px;color:#333;font-weight:normal;letter-spacing:-0.5px;"><span style="margin-left:-0.063em;margin-right:-0.077em">1</span><span style="margin-left:-0.063em;margin-right:-0.077em">1</span>.0<span style="display:inline-block;transform:scaleX(0.95);transform-origin:0 0;margin-right:-0.05em">%</span></div>
<div class="t" style="left:1328px;top:953.4px;font-size:26px;color:#222;font-weight:normal;-webkit-text-stroke:0.5px #fff;">Campaign Performance</div>
<svg style="left:1274px;top:945px" width="42" height="42" viewBox="0 0 42 42"><circle cx="21" cy="21" r="20" fill="#9c33ab"/><path d="M7.8 12.6 V9 Q7.8 7.1 9.6 7.1 H15.3 Q17.2 7.1 19.6 10.2 H33.6 V12.6" fill="none" stroke="#dcb0e3" stroke-width="1.2"/><rect x="6.6" y="13.2" width="29.4" height="19.5" rx="0.6" fill="none" stroke="#dcb0e3" stroke-width="1.3"/></svg>
<svg style="left:1819.2px;top:948.1px" width="30" height="30" viewBox="0 -5 30 30"><path d="M10.55 1.25 H3.75 Q1.25 1.25 1.25 3.75 V19.6 Q1.25 22.1 3.75 22.1 H19.3 Q21.8 22.1 21.8 19.6 V12.85" fill="none" stroke="#555" stroke-width="2.5"/><rect x="5.05" y="10.55" width="2.6" height="7.8" fill="#555"/><rect x="10.25" y="7.95" width="2.5" height="10.4" fill="#555"/><rect x="15.35" y="12.85" width="2.5" height="5.5" fill="#555"/><circle cx="19.45" cy="3.95" r="2.95" fill="none" stroke="#555" stroke-width="2.1"/><circle cx="19.45" cy="3.95" r="4.35" fill="none" stroke="#555" stroke-width="1.3" stroke-dasharray="1.75 1.67" stroke-dashoffset="0.9"/></svg>
<svg style="left:1886px;top:957px" width="24" height="16" viewBox="0 0 24 16"><rect x="0" y="0" width="23.2" height="2.1" fill="#555"/><rect x="4" y="6.5" width="15.2" height="2.1" fill="#555"/><rect x="9" y="13" width="5.2" height="2.1" fill="#555"/></svg>
<svg style="left:1944.2px;top:955.6px" width="6" height="22" viewBox="0 0 6 22"><circle cx="3" cy="3" r="2.4" fill="#555"/><circle cx="3" cy="11" r="2.4" fill="#555"/><circle cx="3" cy="19" r="2.4" fill="#555"/></svg>
<div class="t" style="left:1259.5px;top:998.6px;font-size:18.5px;color:#7a7a7a;font-weight:bold;">Campaign</div>
<div class="t" style="left:1622px;top:998.6px;font-size:18.5px;color:#7a7a7a;font-weight:bold;">Impressions</div>
<div class="t" style="left:1771.5px;top:998.6px;font-size:18.5px;color:#7a7a7a;font-weight:bold;">% <span style="font-family:&quot;Liberation Serif&quot;, serif">&#916;</span></div>
<div class="t" style="right:93.79999999999995px;top:998.6px;font-size:18.5px;color:#7a7a7a;font-weight:bold;">CTR</div>
<div class="t" style="right:27.799999999999955px;top:998.6px;font-size:18.5px;color:#7a7a7a;font-weight:bold;">% <span style="font-family:&quot;Liberation Serif&quot;, serif">&#916;</span></div>
<div class="abs" style="left:1609px;top:1027.0px;width:149px;height:44.7px;background:#f3e8fd;"></div>
<div class="abs" style="left:1824px;top:1027.0px;width:95px;height:44.7px;background:#e8d5fb;"></div>
<div class="abs" style="left:1247px;top:1071.0px;width:737px;height:1.3px;background:#d9d9d9;"></div>
<div class="abs" style="left:1609px;top:1071.7px;width:149px;height:44.7px;background:#f3e8fd;"></div>
<div class="abs" style="left:1824px;top:1071.7px;width:95px;height:44.7px;background:#ecdcfc;"></div>
<div class="abs" style="left:1247px;top:1115.6px;width:737px;height:1.3px;background:#d9d9d9;"></div>
<div class="abs" style="left:1609px;top:1116.3px;width:149px;height:44.7px;background:#f3e8fd;"></div>
<div class="abs" style="left:1824px;top:1116.3px;width:95px;height:44.7px;background:#ecdcfc;"></div>
<div class="abs" style="left:1247px;top:1160.2px;width:737px;height:1.3px;background:#d9d9d9;"></div>
<div class="abs" style="left:1609px;top:1161.0px;width:149px;height:44.7px;background:#f3e8fd;"></div>
<div class="abs" style="left:1824px;top:1161.0px;width:95px;height:44.7px;background:#f0e3fc;"></div>
<div class="abs" style="left:1247px;top:1204.9px;width:737px;height:1.3px;background:#d9d9d9;"></div>
<div class="abs" style="left:1609px;top:1205.6px;width:149px;height:44.7px;background:#f3e8fd;"></div>
<div class="abs" style="left:1824px;top:1205.6px;width:95px;height:44.7px;background:#ecdcfc;"></div>
<div class="abs" style="left:1247px;top:1249.5px;width:737px;height:1.3px;background:#d9d9d9;"></div>
<div class="abs" style="left:1609px;top:1250.2px;width:149px;height:44.7px;background:#f3e8fd;"></div>
<div class="abs" style="left:1824px;top:1250.2px;width:95px;height:44.7px;background:#e8d5fb;"></div>
<div class="abs" style="left:1247px;top:1294.2px;width:737px;height:1.3px;background:#d9d9d9;"></div>
<div class="abs" style="left:1609px;top:1294.9px;width:149px;height:44.7px;background:#f3e8fd;"></div>
<div class="abs" style="left:1824px;top:1294.9px;width:95px;height:44.7px;background:#ecdcfc;"></div>
<div class="abs" style="left:1247px;top:1338.9px;width:737px;height:1.3px;background:#d9d9d9;"></div>
<div class="abs" style="left:1609px;top:1339.5px;width:149px;height:42.5px;background:#f3e8fd;"></div>
<div class="abs" style="left:1824px;top:1339.5px;width:95px;height:42.5px;background:#e1c9fa;"></div>
<div class="t" style="left:1259.5px;top:1039.5px;font-size:19px;color:#2a2a2a;font-weight:normal;letter-spacing:0px;-webkit-text-stroke:0.3px #fff;">Business-focused zero tolerance arch...</div>
<div class="t" style="left:1622px;top:1039.6px;font-size:18.5px;color:#333;font-weight:normal;letter-spacing:-0.5px;">93<span style="margin-left:-0.063em;margin-right:-0.077em">1</span></div>
<div class="t" style="left:1771.5px;top:1039.6px;font-size:18.5px;color:#222;font-weight:normal;">-</div>
<div class="t" style="right:93.79999999999995px;top:1039.6px;font-size:18.5px;color:#333;font-weight:normal;letter-spacing:-0.5px;"><span style="margin-left:-0.063em;margin-right:-0.077em">1</span>0.42<span style="display:inline-block;transform:scaleX(0.95);transform-origin:0 0;margin-right:-0.05em">%</span></div>
<div class="t" style="right:27.799999999999955px;top:1039.6px;font-size:18.5px;color:#222;font-weight:normal;">-</div>
<div class="t" style="left:1259.5px;top:1084.1px;font-size:19px;color:#2a2a2a;font-weight:normal;letter-spacing:0.35px;-webkit-text-stroke:0.3px #fff;">Persistent 24/7 attitude</div>
<div class="t" style="left:1622px;top:1084.2px;font-size:18.5px;color:#333;font-weight:normal;letter-spacing:-0.5px;"><span style="margin-left:-0.063em;margin-right:-0.077em">1</span>K</div>
<div class="t" style="left:1771.5px;top:1084.2px;font-size:18.5px;color:#222;font-weight:normal;">-</div>
<div class="t" style="right:93.79999999999995px;top:1084.2px;font-size:18.5px;color:#333;font-weight:normal;letter-spacing:-0.5px;">9.7<span style="margin-left:-0.063em;margin-right:-0.077em">1</span><span style="display:inline-block;transform:scaleX(0.95);transform-origin:0 0;margin-right:-0.05em">%</span></div>
<div class="t" style="right:27.799999999999955px;top:1084.2px;font-size:18.5px;color:#222;font-weight:normal;">-</div>
<div class="t" style="left:1259.5px;top:1128.8px;font-size:19px;color:#2a2a2a;font-weight:normal;letter-spacing:0.35px;-webkit-text-stroke:0.3px #fff;">Integrated dedicated contingency</div>
<div class="t" style="left:1622px;top:1128.9px;font-size:18.5px;color:#333;font-weight:normal;letter-spacing:-0.5px;">950</div>
<div class="t" style="left:1771.5px;top:1128.9px;font-size:18.5px;color:#222;font-weight:normal;">-</div>
<div class="t" style="right:93.79999999999995px;top:1128.9px;font-size:18.5px;color:#333;font-weight:normal;letter-spacing:-0.5px;">9.58<span style="display:inline-block;transform:scaleX(0.95);transform-origin:0 0;margin-right:-0.05em">%</span></div>
<div class="t" style="right:27.799999999999955px;top:1128.9px;font-size:18.5px;color:#222;font-weight:normal;">-</div>
<div class="t" style="left:1259.5px;top:1173.4px;font-size:19px;color:#2a2a2a;font-weight:normal;letter-spacing:0.35px;-webkit-text-stroke:0.3px #fff;">Profound intangible policy</div>
<div class="t" style="left:1622px;top:1173.5px;font-size:18.5px;color:#333;font-weight:normal;letter-spacing:-0.5px;">978</div>
<div class="t" style="left:1771.5px;top:1173.5px;font-size:18.5px;color:#222;font-weight:normal;">-</div>
<div class="t" style="right:93.79999999999995px;top:1173.5px;font-size:18.5px;color:#333;font-weight:normal;letter-spacing:-0.5px;">8.69<span style="display:inline-block;transform:scaleX(0.95);transform-origin:0 0;margin-right:-0.05em">%</span></div>
<div class="t" style="right:27.799999999999955px;top:1173.5px;font-size:18.5px;color:#222;font-weight:normal;">-</div>
<div class="t" style="left:1259.5px;top:1218.1px;font-size:19px;color:#2a2a2a;font-weight:normal;letter-spacing:0.35px;-webkit-text-stroke:0.3px #fff;">Centralized modular throughput</div>
<div class="t" style="left:1622px;top:1218.2px;font-size:18.5px;color:#333;font-weight:normal;letter-spacing:-0.5px;">955</div>
<div class="t" style="left:1771.5px;top:1218.2px;font-size:18.5px;color:#222;font-weight:normal;">-</div>
<div class="t" style="right:93.79999999999995px;top:1218.2px;font-size:18.5px;color:#333;font-weight:normal;letter-spacing:-0.5px;">9.42<span style="display:inline-block;transform:scaleX(0.95);transform-origin:0 0;margin-right:-0.05em">%</span></div>
<div class="t" style="right:27.799999999999955px;top:1218.2px;font-size:18.5px;color:#222;font-weight:normal;">-</div>
<div class="t" style="left:1259.5px;top:1262.7px;font-size:19px;color:#2a2a2a;font-weight:normal;letter-spacing:0.35px;-webkit-text-stroke:0.3px #fff;">Automated uniform software</div>
<div class="t" style="left:1622px;top:1262.8px;font-size:18.5px;color:#333;font-weight:normal;letter-spacing:-0.5px;">952</div>
<div class="t" style="left:1771.5px;top:1262.8px;font-size:18.5px;color:#222;font-weight:normal;">-</div>
<div class="t" style="right:93.79999999999995px;top:1262.8px;font-size:18.5px;color:#333;font-weight:normal;letter-spacing:-0.5px;"><span style="margin-left:-0.063em;margin-right:-0.077em">1</span>0.<span style="margin-left:-0.063em;margin-right:-0.077em">1</span>9<span style="display:inline-block;transform:scaleX(0.95);transform-origin:0 0;margin-right:-0.05em">%</span></div>
<div class="t" style="right:27.799999999999955px;top:1262.8px;font-size:18.5px;color:#222;font-weight:normal;">-</div>
<div class="t" style="left:1259.5px;top:1307.4px;font-size:19px;color:#2a2a2a;font-weight:normal;letter-spacing:0.35px;-webkit-text-stroke:0.3px #fff;">Cross-platform static hierarchy</div>
<div class="t" style="left:1622px;top:1307.5px;font-size:18.5px;color:#333;font-weight:normal;letter-spacing:-0.5px;">946</div>
<div class="t" style="left:1771.5px;top:1307.5px;font-size:18.5px;color:#222;font-weight:normal;">-</div>
<div class="t" style="right:93.79999999999995px;top:1307.5px;font-size:18.5px;color:#333;font-weight:normal;letter-spacing:-0.5px;">9.3<span style="display:inline-block;transform:scaleX(0.95);transform-origin:0 0;margin-right:-0.05em">%</span></div>
<div class="t" style="right:27.799999999999955px;top:1307.5px;font-size:18.5px;color:#222;font-weight:normal;">-</div>
<div class="t" style="left:1259.5px;top:1352.0px;font-size:19px;color:#2a2a2a;font-weight:normal;letter-spacing:0.35px;-webkit-text-stroke:0.3px #fff;">Networked value-added time-frame</div>
<div class="t" style="left:1622px;top:1352.1px;font-size:18.5px;color:#333;font-weight:normal;letter-spacing:-0.5px;">953</div>
<div class="t" style="left:1771.5px;top:1352.1px;font-size:18.5px;color:#222;font-weight:normal;">-</div>
<div class="t" style="right:93.79999999999995px;top:1352.1px;font-size:18.5px;color:#333;font-weight:normal;letter-spacing:-0.5px;"><span style="margin-left:-0.063em;margin-right:-0.077em">1</span><span style="margin-left:-0.063em;margin-right:-0.077em">1</span>.54<span style="display:inline-block;transform:scaleX(0.95);transform-origin:0 0;margin-right:-0.05em">%</span></div>
<div class="t" style="right:27.799999999999955px;top:1352.1px;font-size:18.5px;color:#222;font-weight:normal;">-</div>
<svg style="left:0;top:0" width="1999" height="1396"><polyline points="59.3,297.4 61.4,242.8 63.2,288.8 70,295.2 71.8,330 76,287 82.3,330 84.2,290.5 90.7,264.7 92.8,319.7 98.9,299.5 101,323.6 103.2,323.2 105.3,318.4 110.9,315.4 118.2,312.4 121.9,262.6 124.2,330 130.5,287.5 134.8,322.3 138.8,297 155.6,294 157.6,323.2 159.5,268.2 161.6,256.5 163.6,301.7 165.9,281 170,316.3 172.4,303.8 178.4,288.4 180.8,313.7 185.3,283.6 189.1,238.5 195.1,312 199,292.7 203.7,295.7 210.2,277.2 211.7,293.5 214.1,228.2 216.2,295.7 220.5,253.5 228.7,294 230.8,259.6 234.7,305.1 237.3,296.5 239.3,323.2 243.3,278.9 245.3,302.5" fill="none" stroke="#7f4ed8" stroke-width="2.3" stroke-linejoin="miter" stroke-miterlimit="3"/><polyline points="374.3,313.6 375.8,308.6 377.5,309.6 384.3,313.6 386.6,330.2 392.6,306.6 397.1,329.7 398.7,290 405.6,296.6 407.6,318.6 411.5,304.6 415.4,329.2 420.2,318.1 424.7,315.6 431.2,314.1 433.2,313.1 436.7,305.6 439,330.2 445,305.6 449,329.7 454.3,313.6 456.8,310.6 470.5,292.1 472.3,323.2 474,299.6 475.3,300.1 476.4,307.6 478,300.6 480.8,305.6 482.6,322.7 484.8,317.1 487.1,317.6 492.8,308.6 495.3,316.1 497.1,297.6 499.6,314.6 507.1,289.6 509.9,313.1 513.9,294.1 518.4,294.6 524.2,279 526.7,295.6 528.4,296.3 530.2,317.1 534.7,304.6 543.2,312.6 547.2,288.1 549.5,317.1 551.5,297.1 553.8,323.2 556,307.6 559.3,303.6" fill="none" stroke="#7f4ed8" stroke-width="2.3" stroke-linejoin="miter" stroke-miterlimit="3"/><polyline points="682,274 686,280.5 692,279.5 694.3,284.5 698,276.5 700.8,276.5 704.8,266.5 706.8,265.3 710.3,269.3 715.3,273 719.5,268.5 721,283 725,278 727.8,279.8 731.8,269.3 740.3,282.3 744.3,275.8 752.5,278.3 756.5,276.5 761.3,285.5 778,271.8 780,275.8 782.3,267.8 784,282 786.3,271.5 788,281.3 790.3,276 794.3,279 800.5,273.5 803,274.5 807.3,271.3 811.5,280 815.3,270.3 821.8,274.3 826,282.5 832,276.5 834.3,283.8 836.3,272.3 838,283 842.3,271.5 850,275 853.3,279.8 856.3,271 859.8,269.5 861.3,285 865.5,281 867.8,282.3" fill="none" stroke="#7f4ed8" stroke-width="2.3" stroke-linejoin="miter" stroke-miterlimit="3"/><polyline points="991.6,304.1 993,291.7 995.7,290.1 1002.1,299.1 1004,334.6 1010.1,288 1014.4,334.6 1016.1,270.3 1022.7,274.8 1025.1,313.6 1028.8,290.9 1031.3,300.4 1033.6,327.1 1037.5,309.4 1041.6,309.4 1050.3,297.5 1053.5,290.1 1056.2,334.6 1062.4,292.1 1066.7,326.7 1070.8,296.7 1087.9,266.2 1089.6,322.2 1092.1,280.2 1093.3,286 1095.8,281 1098.2,285.1 1100.3,320.1 1101.5,308.2 1104,309.8 1111,293.4 1112.7,302.8 1114.7,273.6 1116.8,306.5 1120.9,274.4 1125,262.1 1127.5,303.3 1131.2,266.2 1136.1,257.1 1141.9,232.8 1148.1,299.1 1152.2,287.6 1161.1,301.6 1165,255.5 1166.9,312.3 1169.1,275.7 1171.3,319.7 1173.6,286 1177.3,274.4" fill="none" stroke="#7f4ed8" stroke-width="2.3" stroke-linejoin="miter" stroke-miterlimit="3"/><polyline points="59.6,587 61.4,547.5 63.1,587.8 69.5,585.9 71.7,609.3 76,569.3 78.1,609.9 84.3,608.8 90.5,588.1 93.4,609 97.2,609 99.1,587.3 101.5,587 103.1,610.9 104.7,608.5 117.6,608.5 121.9,569 124.3,608.8 130.2,588.6 134.5,588.4 138.8,589.7 155.4,609.9 157.8,608.2 161.6,569.3 164,608 167.7,568.2 170.2,608.5 172,588.9 178.5,587.8 181.7,609.3 184.9,566.9 189,567.4 193.8,609 198.9,608 211.5,608.8 213.9,567.4 216.1,587 220.4,564.7 228.2,586.7 230.6,567.4 233,607.7 234.6,591.3 236.5,609 241.1,608.5 243.2,589.7 245.4,609.6" fill="none" stroke="#7f4ed8" stroke-width="2.3" stroke-linejoin="miter" stroke-miterlimit="3"/><polyline points="374.2,589.2 376.1,549.7 377.9,590.5 384.1,589.2 386.5,608.8 390.8,570.1 393,609.9 398.9,609.3 405.1,590.8 407.8,611.2 411.8,610.9 413.7,589.7 415.8,587.6 418,609.3 423.3,610.9 432.2,609.3 436.8,572.2 438.9,609 445.1,589.4 452.9,589.2 470.9,610.4 472.5,609.6 476.6,569.6 478.7,609.3 482.7,572 484.9,608.2 486.5,588.1 492.9,590 494.8,610.9 497.5,609.6 498.9,570.4 504,567.7 507.7,610.4 513.4,609.3 518.7,610.4 526.3,609.3 528.4,570.9 530.8,587.8 534.6,567.7 542.6,590 545.1,571.4 547.5,609.9 549.4,591 553.1,610.9 556.1,609.6 558,590.5 560.1,609.3" fill="none" stroke="#7f4ed8" stroke-width="2.3" stroke-linejoin="miter" stroke-miterlimit="3"/><polyline points="681.9,617.2 683.8,527 685.5,575.2 691.7,604.8 694.3,628.7 698.2,585.5 700.3,614.7 704.4,628.7 706.5,602.4 712.9,583 715.1,608.6 719.2,610.6 721.3,590 723.4,603.6 725.8,603.6 727.9,601.1 732,601.1 740.7,610.6 744.4,557.5 746.4,628.7 753.4,595.8 757.1,562 761.3,585.1 773,602.4 778.1,611.4 782.5,598.3 784.5,605.7 788.2,583 790.5,612.3 792.1,600.3 794.6,604.4 800.6,576 803.3,605.3 805.5,598.7 807.2,572.7 811.3,557.5 814.2,582.6 815,614.7 817.9,618 821.6,596.2 825.7,598.7 832.3,591.7 834.1,619.3 836.4,562 838.9,593.7 842.6,581 850.8,600.7 852.9,557.5 855.2,607.7 857.4,557.5 861.6,621.3 863.6,595.8 865.9,589.6 867.7,605.3" fill="none" stroke="#7f4ed8" stroke-width="2.3" stroke-linejoin="miter" stroke-miterlimit="3"/><polyline points="991.6,602.4 993.5,571.2 996,571.6 1008.2,580.5 1010.4,600.2 1016.4,564.8 1022.9,573.4 1025,569.4 1029,588.1 1031.1,586.6 1033.3,564.1 1035.4,577.3 1037.2,558.7 1041.9,559.4 1049.8,583.8 1054,570.1 1062.6,588.8 1066.6,549.7 1070.9,577 1083,582.3 1088,584.8 1089.4,570.1 1091.2,597.7 1094.1,603.8 1095.9,546.5 1099.8,585.2 1101.6,563.7 1104.1,568.7 1110.6,561.5 1112.4,573.7 1114.9,573 1116.7,586.6 1121.3,570.9 1127.4,604.9 1131,547.9 1135.7,547.6 1141.7,526.8 1143.9,607.4 1146,578.7 1148.2,590.9 1152.8,591.3 1160.7,567.3 1165,578.4 1167.2,551.5 1169.3,560.1 1171.5,613.5 1173.3,546.5 1175.8,587 1177.6,583" fill="none" stroke="#7f4ed8" stroke-width="2.3" stroke-linejoin="miter" stroke-miterlimit="3"/></svg>
<div class="abs" style="left:0;top:1393px;width:1999px;height:2px;background:#fff;"></div>
<div class="abs" style="left:0;top:1395px;width:1999px;height:1px;background:#000;"></div>
</body></html>
